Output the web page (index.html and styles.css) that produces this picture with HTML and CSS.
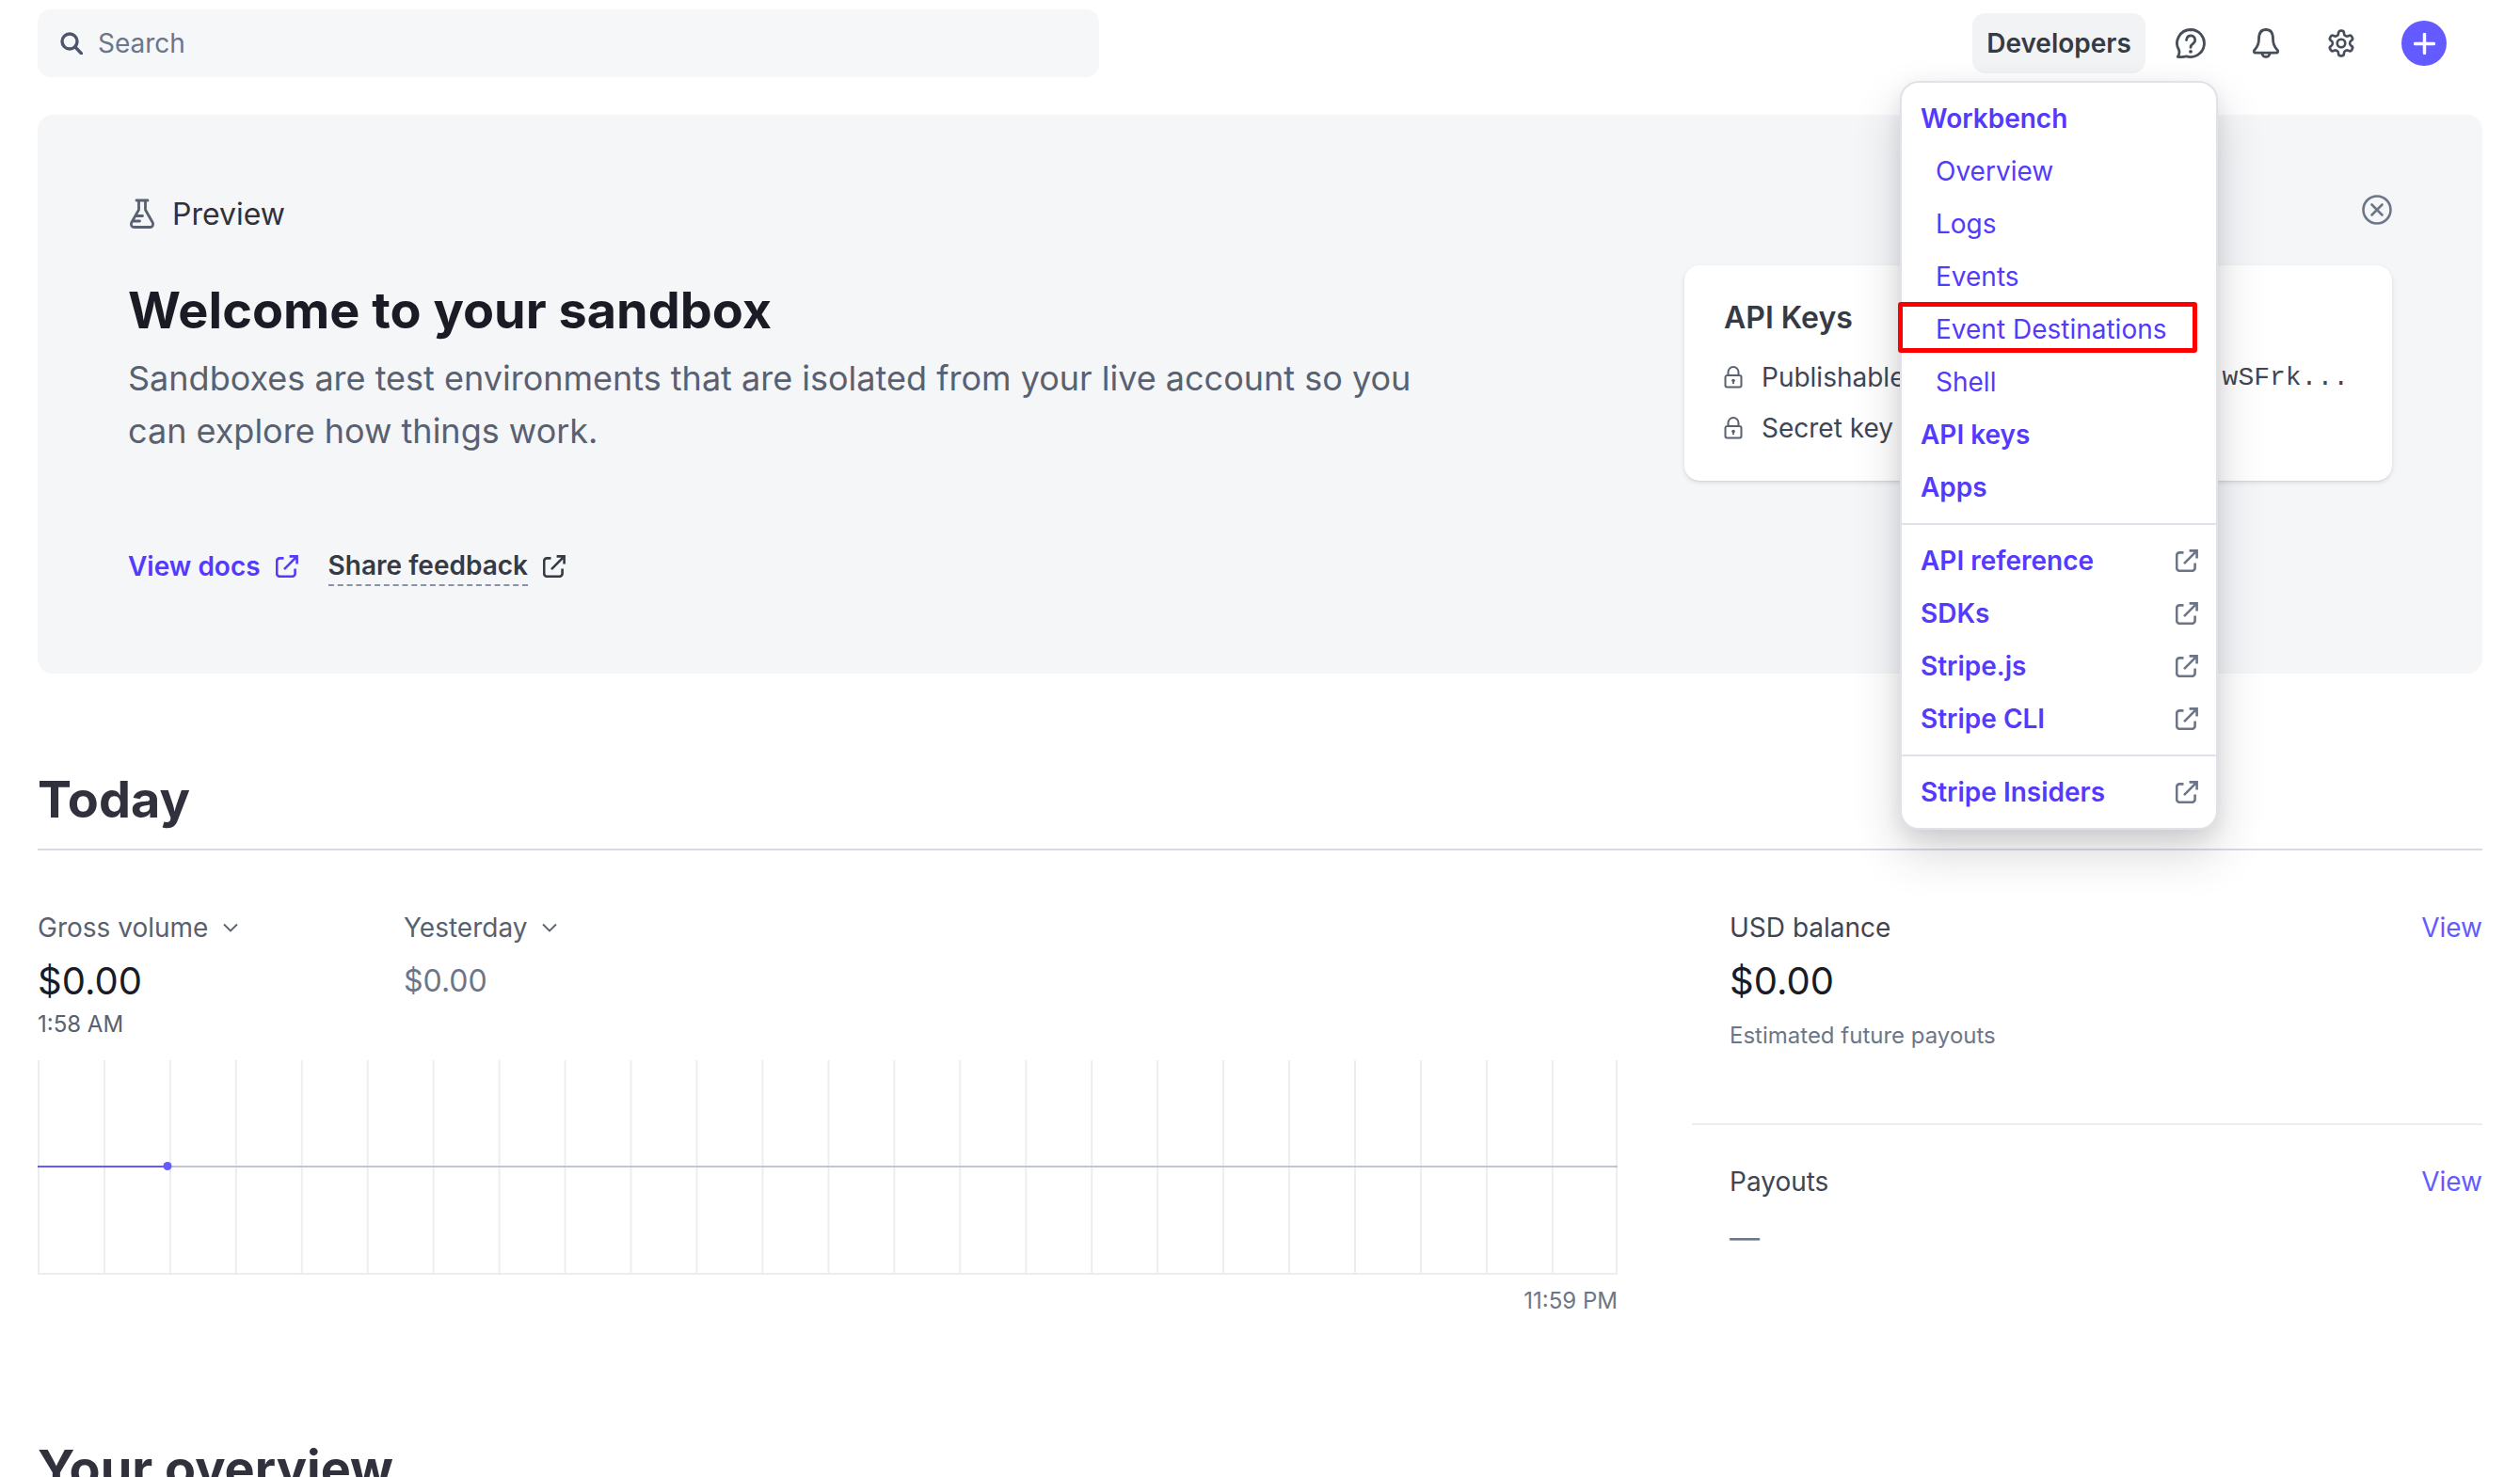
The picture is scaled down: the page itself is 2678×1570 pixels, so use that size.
FILE: index.html
```html
<!DOCTYPE html>
<html lang="en">
<head>
    <meta charset="UTF-8">
    <title>Dashboard</title>
    <link rel="stylesheet" href="styles.css">
</head>
<body>
<svg class="defs" width="0" height="0">
    <symbol id="ext" viewBox="0 0 24 24">
        <path d="M8.5 3.4H4.2a3 3 0 0 0-3 3v13.4a3 3 0 0 0 3 3h13.4a3 3 0 0 0 3-3v-5.4M9 15.200 22.600 1.400M14.600 1.400h8v8" fill="none" stroke="currentColor" stroke-width="2.600"/>
    </symbol>
    <symbol id="lock" viewBox="0 0 20 24">
        <path d="M4.500 10V6.500a5.500 5.500 0 0 1 11 0V10M3.500 10h13a2 2 0 0 1 2 2v8.500a2 2 0 0 1-2 2h-13a2 2 0 0 1-2-2V12a2 2 0 0 1 2-2z" fill="none" stroke="currentColor" stroke-width="2"/>
        <circle cx="10" cy="15.500" r="1.800" fill="currentColor"/>
        <path d="M10 15.500v3.500" stroke="currentColor" stroke-width="1.800"/>
    </symbol>
    <symbol id="chev" viewBox="0 0 16 10">
        <path d="M1 1.500l7 7 7-7" fill="none" stroke="currentColor" stroke-width="1.800"/>
    </symbol>
</svg>

<div class="page">
    <header class="topbar">
        <div class="search">
            <svg class="search-icon" viewBox="0 0 24 24"><circle cx="10" cy="10" r="8" fill="none" stroke="currentColor" stroke-width="3.400"/><path d="M16 16l6.500 7" stroke="currentColor" stroke-width="3.400" stroke-linecap="round"/></svg>
            <span>Search</span>
        </div>
        <div class="actions">
            <div class="dev-btn">Developers</div>
            <svg class="top-icon" viewBox="0 0 32 32"><path d="M16 1.500A14.500 14.500 0 1 1 11.500 29.800C9 30.700 5.500 30.700 2.300 30.400 3.600 28.600 4.300 26 3.700 23.600A14.500 14.500 0 0 1 16 1.500z" fill="none" stroke="currentColor" stroke-width="2.800" stroke-linejoin="round"/><path d="M11.500 12.500a4.600 4.600 0 1 1 7.300 3.700c-1.700 1.200-2.800 2.200-2.800 4.200" fill="none" stroke="currentColor" stroke-width="2.800" stroke-linecap="round"/><circle cx="16" cy="24.800" r="1.900" fill="currentColor"/></svg>
            <svg class="top-icon" viewBox="0 0 32 32"><path d="M16 1.500C10 1.500 8.500 6.500 8.500 11.500 8.500 17 6.500 20.500 3.800 23.200 2.700 24.500 3.400 26.200 5 26.200H27C28.600 26.200 29.300 24.500 28.200 23.200 25.500 20.500 23.500 17 23.500 11.500 23.500 6.500 22 1.500 16 1.500zM11.800 26.200a4.200 4.200 0 0 0 8.400 0" fill="none" stroke="currentColor" stroke-width="2.800" stroke-linejoin="round"/></svg>
            <svg class="top-icon" viewBox="0 0 24 24"><path d="M12.220 2h-.44a2 2 0 0 0-2 2v.18a2 2 0 0 1-1 1.730l-.43.25a2 2 0 0 1-2 0l-.15-.08a2 2 0 0 0-2.730.73l-.22.38a2 2 0 0 0 .73 2.730l.15.1a2 2 0 0 1 1 1.720v.51a2 2 0 0 1-1 1.740l-.15.09a2 2 0 0 0-.73 2.730l.22.38a2 2 0 0 0 2.730.73l.15-.08a2 2 0 0 1 2 0l.43.25a2 2 0 0 1 1 1.730V20a2 2 0 0 0 2 2h.44a2 2 0 0 0 2-2v-.18a2 2 0 0 1 1-1.730l.43-.25a2 2 0 0 1 2 0l.15.08a2 2 0 0 0 2.730-.73l.22-.39a2 2 0 0 0-.73-2.730l-.15-.08a2 2 0 0 1-1-1.740v-.5a2 2 0 0 1 1-1.740l.15-.09a2 2 0 0 0 .73-2.730l-.22-.38a2 2 0 0 0-2.730-.73l-.15.08a2 2 0 0 1-2 0l-.43-.25a2 2 0 0 1-1-1.730V4a2 2 0 0 0-2-2z" fill="none" stroke="currentColor" stroke-width="2"/><circle cx="12" cy="12" r="3.200" fill="none" stroke="currentColor" stroke-width="2"/></svg>
            <div class="plus-btn"><svg viewBox="0 0 24 24"><path d="M12 1.500v21M1.500 12h21" stroke="#fff" stroke-width="3.600" stroke-linecap="round"/></svg></div>
        </div>

        <nav class="menu">
            <div class="menu-group">
                <a class="item strong">Workbench</a>
                <a class="item sub">Overview</a>
                <a class="item sub">Logs</a>
                <a class="item sub">Events</a>
                <a class="item sub">Event Destinations<span class="highlight"></span></a>
                <a class="item sub">Shell</a>
                <a class="item strong">API keys</a>
                <a class="item strong">Apps</a>
            </div>
            <div class="menu-group">
                <a class="item strong">API reference<svg class="ext-grey"><use href="#ext"/></svg></a>
                <a class="item strong">SDKs<svg class="ext-grey"><use href="#ext"/></svg></a>
                <a class="item strong">Stripe.js<svg class="ext-grey"><use href="#ext"/></svg></a>
                <a class="item strong">Stripe CLI<svg class="ext-grey"><use href="#ext"/></svg></a>
            </div>
            <div class="menu-group">
                <a class="item strong">Stripe Insiders<svg class="ext-grey"><use href="#ext"/></svg></a>
            </div>
        </nav>
    </header>

    <section class="banner">
        <div class="banner-left">
            <div class="preview">
                <svg class="flask" viewBox="0 0 28 32"><path d="M8 2h12M10.500 2v10L2.800 25.500C1.500 28 3 30.500 5.800 30.500h16.400c2.800 0 4.300-2.500 3-5L17.500 12V2M7.500 18.500h7M5 24h6.500" fill="none" stroke="currentColor" stroke-width="2.800" stroke-linecap="round" stroke-linejoin="round"/></svg>
                <span>Preview</span>
            </div>
            <h1>Welcome to your sandbox</h1>
            <p class="lead">Sandboxes are test environments that are isolated from your live account so you can explore how things work.</p>
            <div class="banner-links">
                <a class="link-docs">View docs<svg class="ext"><use href="#ext"/></svg></a>
                <a class="link-feedback"><span>Share feedback</span><svg class="ext"><use href="#ext"/></svg></a>
            </div>
        </div>
        <div class="banner-right">
            <svg class="close" viewBox="0 0 32 32"><circle cx="16" cy="16" r="14.500" fill="none" stroke="currentColor" stroke-width="2.600"/><path d="M10.500 10.500l11 11M21.500 10.500l-11 11" stroke="currentColor" stroke-width="2.600" stroke-linecap="round"/></svg>
            <div class="keys-card">
                <h3>API Keys</h3>
                <div class="key-row">
                    <svg class="lock"><use href="#lock"/></svg>
                    <span>Publishable key</span>
                    <code>wSFrk...</code>
                </div>
                <div class="key-row">
                    <svg class="lock"><use href="#lock"/></svg>
                    <span>Secret key</span>
                </div>
            </div>
        </div>
    </section>

    <h2 class="section-title today">Today</h2>

    <section class="today-grid">
        <div class="volume">
            <div class="metrics">
                <div class="metric">
                    <div class="metric-label">Gross volume<svg class="chev"><use href="#chev"/></svg></div>
                    <div class="amount">$0.00</div>
                    <div class="time">1:58 AM</div>
                </div>
                <div class="metric">
                    <div class="metric-label">Yesterday<svg class="chev"><use href="#chev"/></svg></div>
                    <div class="amount muted">$0.00</div>
                </div>
            </div>
            <svg class="chart" viewBox="0 0 1679 228" width="1679" height="228">
                <defs>
                    <pattern id="grid" width="69.950" height="228" patternUnits="userSpaceOnUse">
                        <rect x="0" y="0" width="2" height="228" fill="#ebeef1"/>
                    </pattern>
                </defs>
                <rect width="1679" height="228" fill="url(#grid)"/>
                <rect x="1677" width="2" height="228" fill="#ebeef1"/>
                <rect y="226" width="1679" height="2" fill="#ebeef1"/>
                <rect y="112" width="1679" height="2" fill="#c0c5d2"/>
                <rect y="112" width="138" height="2" fill="#635bff"/>
                <circle cx="138" cy="112.500" r="4.500" fill="#635bff"/>
            </svg>
            <div class="chart-end">11:59 PM</div>
        </div>
        <aside class="side">
            <div class="side-block balance">
                <div class="side-head"><span>USD balance</span><a>View</a></div>
                <div class="amount">$0.00</div>
                <div class="note">Estimated future payouts</div>
            </div>
            <div class="side-block payouts">
                <div class="side-head"><span>Payouts</span><a>View</a></div>
                <div class="dash">—</div>
            </div>
        </aside>
    </section>

    <h2 class="section-title overview">Your overview</h2>
</div>
</body>
</html>
```

FILE: styles.css
```css
html, body {
    margin: 0;
    height: 1570px;
    overflow: hidden;
    background: #fff;
}
body {
    font-family: Inter, "Noto Sans", sans-serif;
    font-size: 28px;
    color: #30313d;
}
.defs {
    position: absolute;
}
.page {
    padding: 0 78px 0 40px;
}

/* top bar */
.topbar {
    position: relative;
    display: flex;
    justify-content: space-between;
    padding-top: 10px;
}
.search {
    display: flex;
    align-items: center;
    gap: 16px;
    width: 1128px;
    height: 72px;
    padding-left: 24px;
    box-sizing: border-box;
    background: #f6f7f9;
    border-radius: 14px;
    color: #6c7688;
}
.search-icon {
    width: 24px;
    height: 24px;
    color: #4f566b;
}
.actions {
    display: flex;
    align-items: center;
    gap: 48px;
    height: 72px;
}
.dev-btn {
    display: flex;
    align-items: center;
    justify-content: center;
    width: 184px;
    height: 64px;
    margin-right: -16px;
    background: #f2f3f5;
    border-radius: 14px;
    color: #353a44;
    font-weight: 600;
}
.top-icon {
    width: 32px;
    height: 32px;
    color: #474e5a;
}
.plus-btn {
    display: flex;
    align-items: center;
    justify-content: center;
    width: 48px;
    height: 48px;
    border-radius: 50%;
    background: #635bff;
}
.plus-btn svg {
    width: 23px;
    height: 23px;
}

/* developers menu */
.menu {
    position: absolute;
    z-index: 5;
    top: 86px;
    left: 1979px;
    width: 338px;
    box-sizing: border-box;
    background: #fff;
    border: 2px solid #dfe2e8;
    border-radius: 20px;
    box-shadow: 0 24px 50px rgba(48, 49, 61, 0.2), 0 6px 20px rgba(0, 0, 0, 0.08);
}
.menu-group {
    padding: 10px 0;
    border-top: 2px solid #dfe2e8;
}
.menu-group:first-child {
    border-top: 0;
}
.item {
    position: relative;
    display: flex;
    align-items: center;
    justify-content: space-between;
    height: 56px;
    padding: 0 20px;
    color: #533afd;
}
.strong {
    font-weight: 600;
}
.sub {
    padding-left: 36px;
}
.ext-grey {
    width: 24px;
    height: 24px;
    margin-right: -1px;
    color: #6c7688;
}
.highlight {
    position: absolute;
    top: -1px;
    left: -4px;
    width: 318px;
    height: 54px;
    box-sizing: border-box;
    border: 5px solid #ff0000;
    border-radius: 3px;
}

/* sandbox banner */
.banner {
    display: flex;
    justify-content: space-between;
    height: 594px;
    margin: 40px -38px 0 0;
    padding: 0 96px;
    box-sizing: border-box;
    background: #f5f6f8;
    border-radius: 16px;
}
.banner-left {
    padding-top: 89px;
}
.preview {
    display: flex;
    align-items: center;
    gap: 18px;
    height: 32px;
    font-size: 32px;
}
.flask {
    width: 28px;
    height: 32px;
    margin-left: 1px;
    color: #596171;
}
h1 {
    margin: 53px 0 0;
    font-size: 54px;
    line-height: 68px;
    font-weight: 700;
    color: #1a1b25;
}
.lead {
    width: 1400px;
    margin: 10px 0 0;
    font-size: 36px;
    line-height: 56px;
    color: #596171;
}
.banner-links {
    display: flex;
    align-items: center;
    gap: 32px;
    margin-top: 95px;
    font-size: 28px;
    line-height: 40px;
    font-weight: 600;
}
.banner-links a {
    display: flex;
    align-items: center;
    gap: 16px;
}
.link-docs {
    color: #533afd;
}
.link-feedback {
    color: #353a44;
}
.link-feedback span {
    border-bottom: 2px dashed #8a92a3;
}
.ext {
    width: 24px;
    height: 24px;
}
.banner-right {
    display: flex;
    flex-direction: column;
    align-items: flex-end;
    padding-top: 85px;
}
.close {
    width: 32px;
    height: 32px;
    color: #6c7688;
}
.keys-card {
    width: 752px;
    height: 229px;
    margin-top: 43px;
    padding: 36px 46px 0 42px;
    box-sizing: border-box;
    background: #fff;
    border-radius: 16px;
    box-shadow: 0 2px 5px rgba(60, 66, 87, 0.14), 0 1px 1px rgba(0, 0, 0, 0.06);
}
.keys-card h3 {
    margin: 0 0 16px;
    font-size: 32px;
    line-height: 40px;
    font-weight: 600;
    color: #353a44;
}
.key-row {
    display: flex;
    align-items: center;
    height: 54px;
    color: #414552;
}
.lock {
    width: 20px;
    height: 24px;
    margin-right: 20px;
    color: #596171;
}
.key-row code {
    margin-left: auto;
    font-family: "Liberation Mono", monospace;
    font-size: 28px;
}

/* today */
.section-title {
    margin: 0;
    font-size: 54px;
    line-height: 68px;
    font-weight: 700;
    color: #30313d;
}
.today {
    margin: 100px -38px 0 0;
    padding-bottom: 18px;
    border-bottom: 2px solid #d8dbe3;
}
.today-grid {
    display: flex;
    justify-content: space-between;
    margin: 62px -38px 0 0;
}
.volume {
    width: 1679px;
}
.metrics {
    display: flex;
    height: 161px;
}
.metric {
    width: 389px;
}
.metric-label {
    display: flex;
    align-items: center;
    gap: 16px;
    line-height: 40px;
    color: #596171;
}
.chev {
    width: 16px;
    height: 10px;
    color: #596171;
}
.amount {
    margin-top: 9px;
    font-size: 40px;
    line-height: 56px;
    color: #1a1b25;
}
.amount.muted {
    font-size: 32px;
    color: #6c7688;
}
.time {
    font-size: 24px;
    line-height: 36px;
    color: #596171;
}
.chart {
    display: block;
}
.chart-end {
    margin-top: 10px;
    text-align: right;
    font-size: 24px;
    line-height: 36px;
    color: #6c7688;
}
.side {
    width: 840px;
}
.side-block {
    padding-left: 40px;
}
.balance {
    height: 228px;
    border-bottom: 2px solid #ebeef1;
}
.payouts {
    padding-top: 40px;
}
.side-head {
    display: flex;
    justify-content: space-between;
    line-height: 40px;
    color: #414552;
}
.side-head a {
    color: #635bff;
}
.note {
    margin-top: 12px;
    font-size: 24px;
    line-height: 36px;
    color: #6c7688;
}
.dash {
    margin-top: 20px;
    font-size: 32px;
    line-height: 40px;
    color: #6c7688;
}
.overview {
    margin-top: 126px;
}
```
